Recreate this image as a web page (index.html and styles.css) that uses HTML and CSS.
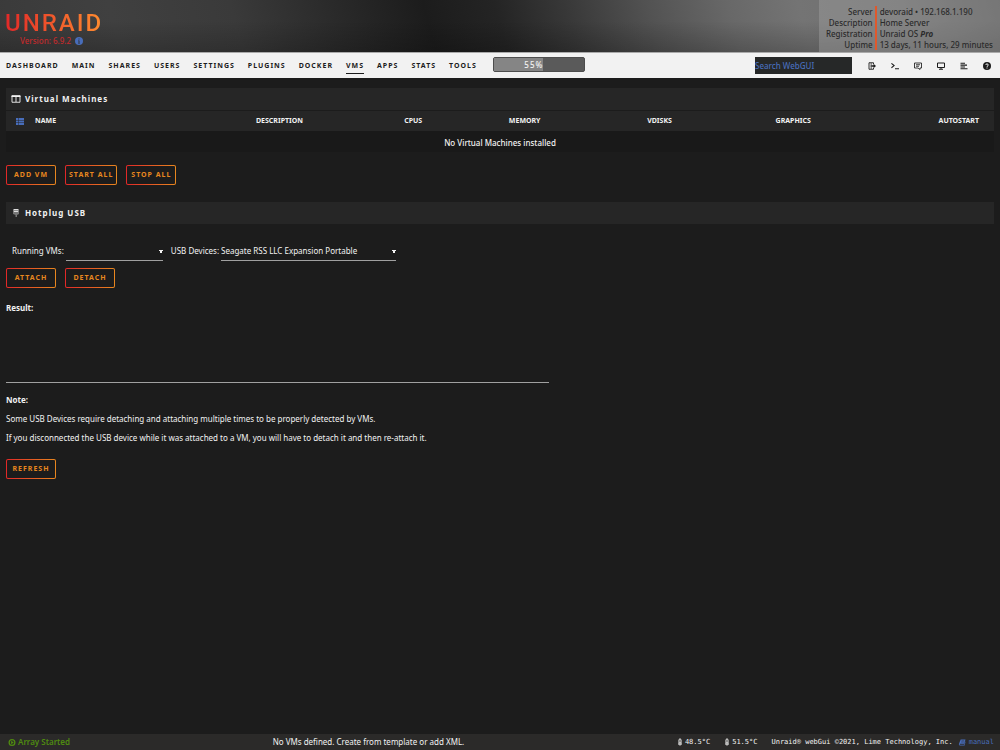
FILE: index.html
```html
<!DOCTYPE html>
<html lang="en">
<head>
<meta charset="utf-8">
<title>devoraid/VMs</title>
<link rel="stylesheet" href="styles.css">
</head>
<body>
<header class="header">
  <div class="brand">
    <a class="logo" href="#">UNRAID</a>
    <div class="version">Version: 6.9.2
      <svg class="info" viewBox="0 0 16 16"><circle cx="8" cy="8" r="8" fill="currentColor"/><path d="M6 7h3v5h1v1H6v-1h1V8H6zM7 3h2v2H7z" fill="#303030"/></svg>
    </div>
  </div>
  <div class="server">
    <div class="labels"><span>Server</span><span>Description</span><span>Registration</span><span>Uptime</span></div>
    <div class="values"><span>devoraid • 192.168.1.190</span><span>Home Server</span><span>Unraid OS <b><i>Pro</i></b></span><span>13 days, 11 hours, 29 minutes</span></div>
  </div>
</header>
<nav class="nav">
  <div class="menu">
    <a href="#">DASHBOARD</a><a href="#">MAIN</a><a href="#">SHARES</a><a href="#">USERS</a><a href="#">SETTINGS</a><a href="#">PLUGINS</a><a href="#">DOCKER</a><a href="#" class="active">VMS</a><a href="#">APPS</a><a href="#">STATS</a><a href="#">TOOLS</a>
  </div>
  <div class="usage"><div class="usage-bar" style="width:55%">55%</div></div>
  <input class="search" type="text" placeholder="Search WebGUI" aria-label="Search WebGUI">
  <div class="tools">
    <a href="#" aria-label="Logout"><svg viewBox="0 0 16 16"><path d="M11 4V1.500H2v13h9V12M5 4h3M5 12h3" fill="none" stroke="currentColor" stroke-width="1.800"/><path d="M5 6.500h6V3.500l5 4.500-5 4.500V9.500H5z" fill="currentColor"/></svg></a>
    <a href="#" aria-label="Terminal"><svg viewBox="0 0 18 16"><path d="M1 2l6 5-6 5M9 14h9" fill="none" stroke="currentColor" stroke-width="2.400"/></svg></a>
    <a href="#" aria-label="Feedback"><svg viewBox="0 0 16 16"><path d="M1 2h14v10h-3v3l-4-3H1zM4 5.500h8M4 8.500h6" fill="none" stroke="currentColor" stroke-width="1.700"/></svg></a>
    <a href="#" aria-label="System"><svg viewBox="0 0 16 16"><path d="M1 2h14v9H1zM8 11v3M4 14.500h8" fill="none" stroke="currentColor" stroke-width="2"/></svg></a>
    <a href="#" aria-label="Log"><svg viewBox="0 0 16 16"><path d="M1 2.500h9M1 6.200h13M1 9.900h9M1 13.600h14" fill="none" stroke="currentColor" stroke-width="2.200"/></svg></a>
    <a href="#" aria-label="Help"><svg viewBox="0 0 16 16"><circle cx="8" cy="8" r="8" fill="currentColor"/><path d="M5.500 6c0-3 5-3 5 0 0 1.800-2.500 1.600-2.500 3.800M8 11v2" fill="none" stroke="#f2f2f2" stroke-width="2"/></svg></a>
  </div>
</nav>
<main class="content">
  <h2 class="title"><svg viewBox="0 0 20 16"><path d="M2 1.500h16v13H2zM10 2v12" fill="none" stroke="currentColor" stroke-width="1.800"/><path d="M1 1h18v3H1z" fill="currentColor"/></svg>Virtual Machines</h2>
  <table class="vms">
    <colgroup><col class="c-name"><col class="c-desc"><col class="c-cpus"><col class="c-mem"><col class="c-disk"><col class="c-gfx"><col></colgroup>
    <thead><tr>
      <th><span class="name"><svg viewBox="0 0 16 14"><path d="M0 0h4v4H0zM5 0h11v4H5zM0 5h4v4H0zM5 5h11v4H5zM0 10h4v4H0zM5 10h11v4H5z" fill="currentColor"/></svg>NAME</span></th>
      <th>DESCRIPTION</th><th>CPUS</th><th>MEMORY</th><th>VDISKS</th><th>GRAPHICS</th><th class="last">AUTOSTART</th>
    </tr></thead>
    <tbody><tr><td colspan="7">No Virtual Machines installed</td></tr></tbody>
  </table>
  <div class="buttons">
    <button type="button">ADD VM</button><button type="button">START ALL</button><button type="button">STOP ALL</button>
  </div>
  <h2 class="title usb"><svg viewBox="0 0 20 16"><path d="M5 0h10v6H5z" fill="#ddd"/><path d="M4 6h12v4l-4 2v4H9v-4l-5-2z" fill="#777"/><path d="M7 2h2v2H7zM11 2h2v2h-2z" fill="#444"/></svg>Hotplug USB</h2>
  <form class="hotplug">
    <div class="fields">
      <label for="vm">Running VMs:</label>
      <select id="vm" class="vm"><option></option></select>
      <label for="usb" class="second">USB Devices:</label>
      <select id="usb" class="device"><option>Seagate RSS LLC Expansion Portable</option></select>
    </div>
    <div class="buttons">
      <button type="button">ATTACH</button><button type="button">DETACH</button>
    </div>
  </form>
  <section class="result"><b>Result:</b></section>
  <section class="note">
    <b>Note:</b>
    <p>Some USB Devices require detaching and attaching multiple times to be properly detected by VMs.</p>
    <p>If you disconnected the USB device while it was attached to a VM, you will have to detach it and then re-attach it.</p>
  </section>
  <div class="buttons"><button type="button">REFRESH</button></div>
</main>
<footer class="footer">
  <div class="status"><svg viewBox="0 0 16 16"><circle cx="8" cy="8" r="6.500" fill="none" stroke="currentColor" stroke-width="3"/><path d="M6 4l6 4-6 4z" fill="currentColor"/></svg>Array Started</div>
  <div class="message">No VMs defined. Create from template or add XML.</div>
  <div class="credits">
    <span class="temp"><svg viewBox="0 0 10 16"><path d="M3 10V3q2-3 4 0v7q2 4-2 4t-2-4z" fill="none" stroke="currentColor" stroke-width="2"/><path d="M5 8v4" stroke="currentColor" stroke-width="2"/></svg>48.5°C</span>
    <span class="temp"><svg viewBox="0 0 10 16"><path d="M3 10V3q2-3 4 0v7q2 4-2 4t-2-4z" fill="none" stroke="currentColor" stroke-width="2"/><path d="M5 8v4" stroke="currentColor" stroke-width="2"/></svg>51.5°C</span>
    <span>Unraid® webGui ©2021, Lime Technology, Inc.</span>
    <a class="manual" href="#"><svg viewBox="0 0 16 16"><path d="M5 1h11l-3 10H3q-1 2 1 2h9l2-7h1l-2 9H3Q0 15 1 11z" fill="currentColor"/><path d="M7 4h6M6 7h6" stroke="#2b2a29"/></svg>manual</a>
  </div>
</footer>
</body>
</html>
```
FILE: styles.css
```css
* { box-sizing: border-box; }
body {
  margin: 0;
  min-height: 100vh;
  display: flex;
  flex-direction: column;
  background: #1c1c1c;
  color: #f2f2f2;
  font: 500 8px/12px "Noto Sans", sans-serif;
}
a { color: inherit; text-decoration: none; }
svg { display: block; width: 8px; height: 8px; flex: none; }
.header {
  display: flex;
  justify-content: space-between;
  height: 52px;
  background:
    linear-gradient(to bottom, rgba(0,0,0,0) 40%, rgba(0,0,0,.2)),
    linear-gradient(75deg, #3a3a3a 0%, #404040 12%, #3a3a3a 24%, #2a2a2a 34%, #1c1c1c 43%, #242424 50%, #383838 57%, #525252 65%, #686868 73%, #747474 80%, #6e6e6e 90%, #555 100%);
}
.brand { padding: 10px 5px 0; }
.logo {
  display: block;
  font: 500 24px/26px Roboto, sans-serif;
  letter-spacing: 2px;
  background: linear-gradient(90deg, #e22828, #ff8c2f);
  background-clip: text;
  color: transparent;
}
.version { display: flex; align-items: center; gap: 4px; padding-left: 15px; line-height: 10px; color: #c22a2c; }
.version svg { color: #486dba; }
.server {
  display: flex;
  gap: 2px;
  padding: 6px 7px 2px;
  background: rgba(160,160,160,.45);
  color: #2b2b2b;
  line-height: 11px;
}
.labels, .values { display: flex; flex-direction: column; }
.labels { text-align: right; }
.values { border-left: 2px solid #e0582c; padding-left: 3px; }
.nav {
  display: flex;
  align-items: center;
  height: 26px;
  padding: 0 9px 0 6px;
  background: #f2f2f2;
  border-top: 1px solid #aaa;
  color: #1c1c1c;
}
.menu { display: flex; gap: 13px; }
.menu a { font-size: 7px; font-weight: 700; letter-spacing: 1px; padding: 3px 0 1px; border-bottom: 1px solid transparent; }
.menu .active { border-color: #1c1c1c; }
.usage { width: 92px; height: 15px; margin: 0 auto 3px 16px; background: #5a5a5a; border: 1px solid #4d4d4d; border-radius: 2px; }
.usage-bar { height: 100%; line-height: 13px; background: #858585; color: #f2f2f2; text-align: right; letter-spacing: 1px; }
.search { width: 97px; height: 17px; padding: 0; border: 0; background: #262828; color: #f2f2f2; font: inherit; }
.search::placeholder { color: #486dba; opacity: 1; }
.tools { display: flex; gap: 15px; margin-left: 16px; }
.content { flex: 1; padding: 10px 6px; font-weight: 400; }
.title {
  display: flex;
  align-items: center;
  gap: 4px;
  height: 22px;
  margin: 0;
  padding-left: 5px;
  background: #262626;
  font-size: 8px;
  font-weight: 700;
  letter-spacing: 1px;
}
.title svg { width: 10px; }
.vms { width: 100%; margin-top: 1px; border-collapse: collapse; table-layout: fixed; }
.vms th { height: 20px; padding: 0; background: #262626; text-align: left; font-size: 7px; font-weight: 700; }
.vms .last { text-align: right; padding-right: 15px; }
.vms td { height: 21px; padding: 3px 0 0; background: #191919; text-align: center; font-weight: 500; }
.c-name { width: 25.300%; }
.c-desc { width: 15%; }
.c-cpus { width: 10.600%; }
.c-mem { width: 14%; }
.c-disk { width: 13%; }
.c-gfx { width: 13%; }
.name { display: flex; align-items: center; gap: 11px; padding-left: 10px; }
.name svg { color: #486dba; height: 7px; }
.buttons { display: flex; gap: 9px; }
.vms + .buttons { margin-top: 13px; }
button {
  min-width: 50px;
  height: 20px;
  padding: 0 3px;
  border: 1px solid transparent;
  border-radius: 2px;
  background: linear-gradient(#1c1c1c, #1c1c1c) padding-box, linear-gradient(90deg, #e22828, #e8871f) border-box;
  color: #e8871f;
  font: 700 7px/12px "Noto Sans", sans-serif;
  letter-spacing: 1px;
}
.usb { margin-top: 17px; }
.fields { display: flex; align-items: center; padding: 17px 6px 7px; }
.fields .second { margin-left: 8px; }
select {
  appearance: none;
  height: 20px;
  margin-left: 2px;
  padding: 0 10px 0 0;
  border: 0;
  border-bottom: 1px solid #a0a0a0;
  border-radius: 0;
  background:
    linear-gradient(to bottom right, #f2f2f2 50%, transparent 52%) right 0 top 9px / 2px 4px no-repeat,
    linear-gradient(to bottom left, #f2f2f2 50%, transparent 52%) right 2px top 9px / 2px 4px no-repeat;
  color: inherit;
  font: inherit;
}
.vm { width: 97px; }
.device { width: 175px; }
.result { width: 55%; height: 81px; margin-top: 14px; border-bottom: 1px solid #a0a0a0; }
.note { margin: 11px 0 15px; }
.note p { margin: 7px 0 0; }
.footer {
  display: flex;
  align-items: center;
  justify-content: space-between;
  height: 16px;
  padding: 0 6px 0 8px;
  background: #2b2a29;
}
.status { display: flex; align-items: center; gap: 2px; color: #4f8a10; font-weight: 600; }
.message { margin-right: 10px; font-weight: 400; }
.credits { display: flex; align-items: center; font: 7px/12px "DejaVu Sans Mono", monospace; white-space: nowrap; }
.temp { display: flex; align-items: center; gap: 2px; margin-right: 14px; }
.temp svg { width: 6px; }
.manual { display: flex; align-items: center; gap: 3px; margin-left: 5px; color: #486dba; }
.status svg, .manual svg { width: 8px; height: 7px; }
```
